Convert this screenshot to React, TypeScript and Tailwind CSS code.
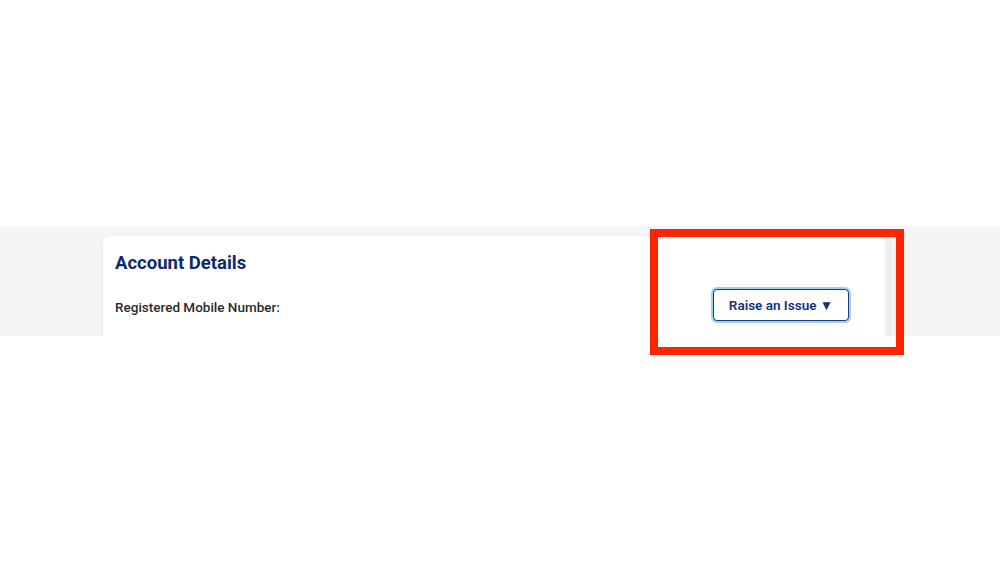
import React from 'react';

const App = () => {
  return (
    <div className="relative w-[1000px] h-[562px] bg-white overflow-hidden" style={{ fontFamily: 'Roboto, "Liberation Sans", sans-serif' }}>
      <div className="mt-[226px] h-[110px] bg-[#f5f5f5] overflow-hidden pt-[10px] pl-[103px]">
        <div className="w-[787px] h-[140px] bg-white rounded-lg shadow-[0_1px_4px_rgba(0,0,0,0.08)] border-r-[5px] border-[#eeeeee] pl-[12px] pr-[35px] pt-[15px]">
          <h2 className="text-[18.5px] leading-[24px] font-bold text-[#0c2a6b]">Account Details</h2>
          <div className="mt-[14px] flex items-center justify-between">
            <span className="mt-[5px] text-[13.5px] font-medium text-[#2b2b2b]">Registered Mobile Number:</span>
            <button className="w-[136px] h-[32px] mr-[1px] rounded-[4px] border border-[#1f3a78] ring-2 ring-[#9fd0fa] bg-white text-[13.5px] font-semibold text-[#143275]">
              Raise an Issue ▼
            </button>
          </div>
        </div>
      </div>

      {/* highlight overlay */}
      <div className="absolute left-[650px] top-[229px] w-[254px] h-[126px] border-[8px] border-[#ff2400] pointer-events-none" />
    </div>
  );
};

export default App;
